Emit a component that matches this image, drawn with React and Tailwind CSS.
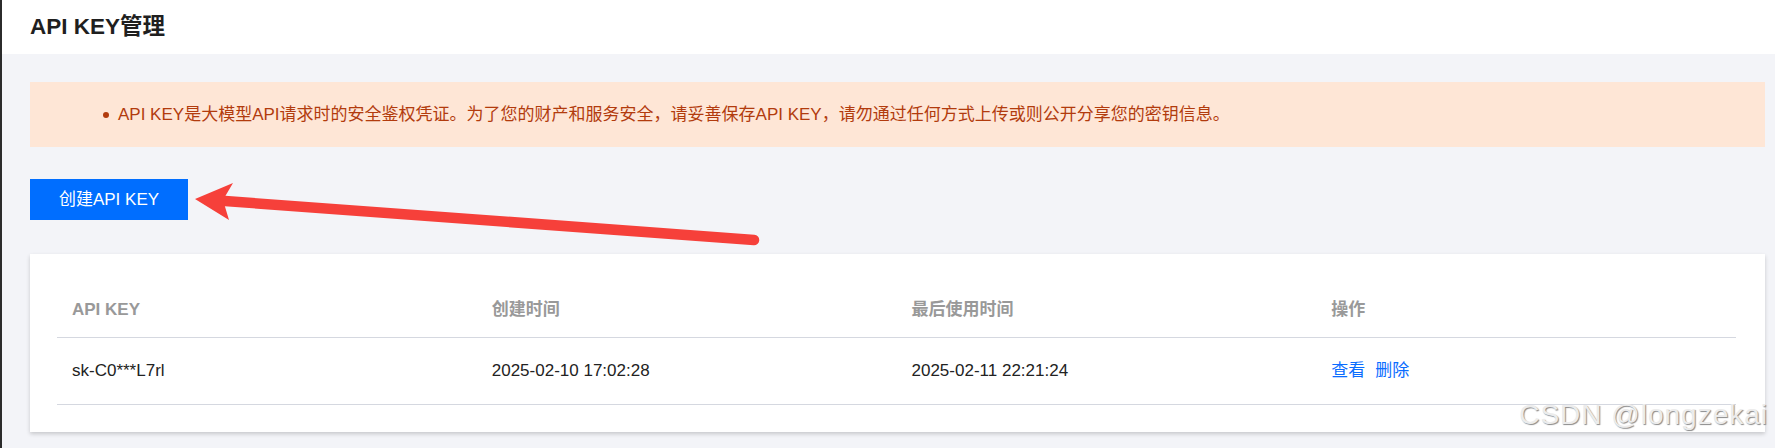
import React from 'react';

const FONT = '[font-family:"Liberation_Sans","Noto_Sans_CJK_SC",sans-serif]';

const keys = [
  { key: 'sk-C0***L7rl', created: '2025-02-10 17:02:28', lastUsed: '2025-02-11 22:21:24' },
];

// red annotation arrow drawn over the page
const Arrow = () => (
  <svg className="absolute left-0 top-0 pointer-events-none" width="1775" height="448">
    <line x1="216" y1="200.5" x2="752" y2="240" stroke="#f6403a" strokeWidth="10.5" strokeLinecap="round" />
    <polygon points="193,199 231,183 221,200 227,220" fill="#f6403a" />
  </svg>
);

export default function App() {
  return (
    <div className={`relative min-h-[448px] bg-[#f3f4f8] border-l-2 border-[#2b2b2b] ${FONT}`}>
      <header className="h-[54px] bg-white flex items-center pl-[28px]">
        <h1 className="text-[22.5px] font-bold text-[#1f1f1f] leading-none">API KEY管理</h1>
      </header>

      <div className="pl-[28px] pr-[10px]">
        {/* Notice */}
        <div className="mt-[28px] h-[65px] bg-[#fee6d6] flex items-center pl-[73px]">
          <span className="w-[6px] h-[6px] rounded-full bg-[#b23b0d] mr-[9px]"></span>
          <span className="text-[17px] text-[#b23b0d]">
            API KEY是大模型API请求时的安全鉴权凭证。为了您的财产和服务安全，请妥善保存API KEY，请勿通过任何方式上传或则公开分享您的密钥信息。
          </span>
        </div>

        <button className="mt-[32px] h-[41px] w-[158px] bg-[#006eff] text-white text-[17px] flex items-center justify-center">
          创建API KEY
        </button>

        {/* Key table */}
        <div className="mt-[34px] bg-white shadow-[0_2px_4px_rgba(0,0,0,0.18)] pl-[27px] pr-[29px] pt-[29px] pb-[27px]">
          <div className="grid grid-cols-4 h-[55px] border-b border-[#d5d8e0] items-center text-[17px] font-bold text-[#999999]">
            <div className="pl-[15px]">API KEY</div>
            <div className="pl-[15px]">创建时间</div>
            <div className="pl-[15px]">最后使用时间</div>
            <div className="pl-[15px]">操作</div>
          </div>
          {keys.map((k) => (
            <div key={k.key} className="grid grid-cols-4 h-[67px] border-b border-[#d5d8e0] items-center text-[17px] text-[#222222]">
              <div className="pl-[15px]">{k.key}</div>
              <div className="pl-[15px]">{k.created}</div>
              <div className="pl-[15px]">{k.lastUsed}</div>
              <div className="pl-[15px] flex gap-[10px] text-[#0a6cff]">
                <span>查看</span>
                <span>删除</span>
              </div>
            </div>
          ))}
        </div>
      </div>

      <Arrow />

      <div className="absolute right-[7px] top-[401px] text-[28px] tracking-[1px] text-[#ececec] [text-shadow:1px_1px_1px_#8a8a8a] leading-none [font-family:'Liberation_Sans',sans-serif]">
        CSDN @longzekai
      </div>
    </div>
  );
}
